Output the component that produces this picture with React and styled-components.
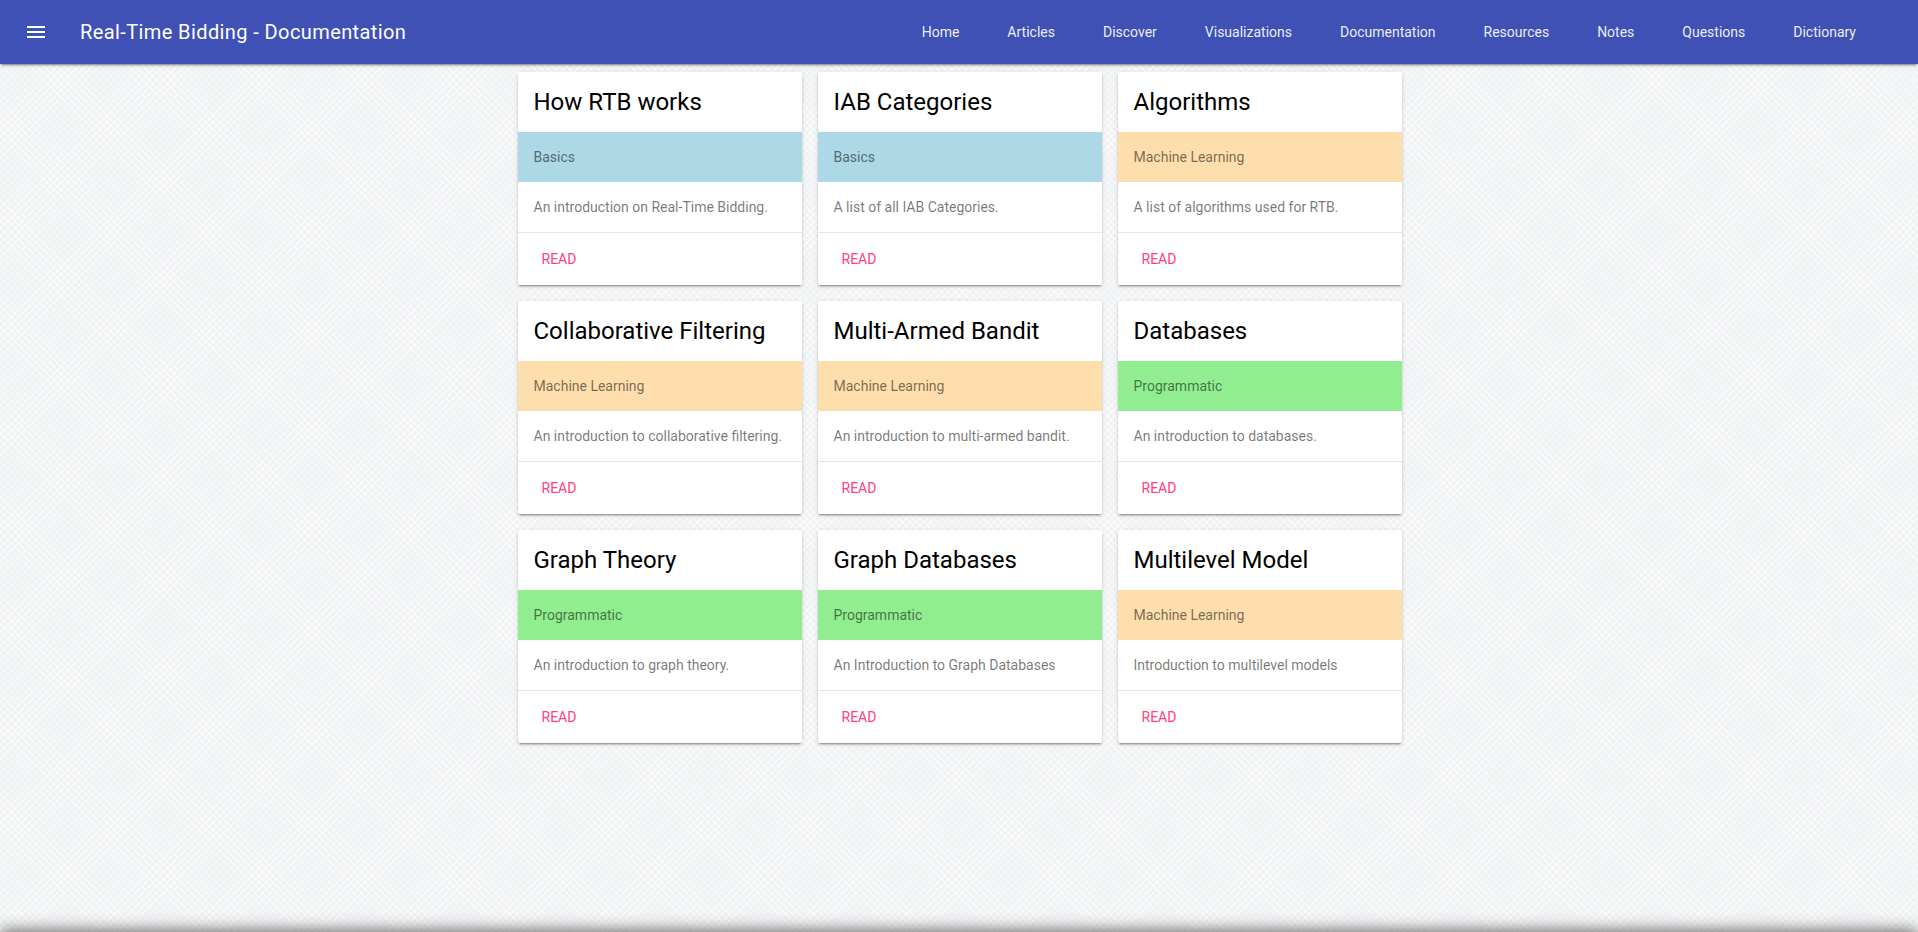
import React from 'react';
import styled, { createGlobalStyle } from 'styled-components';

const GlobalStyle = createGlobalStyle`
  html, body {
    margin: 0;
    padding: 0;
  }
  body {
    font-family: Roboto, "Helvetica Neue", Arial, sans-serif;
    background-color: #f1f2f4;
    background-image:
      repeating-linear-gradient(45deg, rgba(255, 255, 255, 0.6) 0 1px, transparent 1px 5px),
      repeating-linear-gradient(-45deg, rgba(255, 255, 255, 0.6) 0 1px, transparent 1px 5px);
  }
`;

const cards = [
  { title: 'How RTB works', category: 'Basics', text: 'An introduction on Real-Time Bidding.' },
  { title: 'IAB Categories', category: 'Basics', text: 'A list of all IAB Categories.' },
  { title: 'Algorithms', category: 'Machine Learning', text: 'A list of algorithms used for RTB.' },
  { title: 'Collaborative Filtering', category: 'Machine Learning', text: 'An introduction to collaborative filtering.' },
  { title: 'Multi-Armed Bandit', category: 'Machine Learning', text: 'An introduction to multi-armed bandit.' },
  { title: 'Databases', category: 'Programmatic', text: 'An introduction to databases.' },
  { title: 'Graph Theory', category: 'Programmatic', text: 'An introduction to graph theory.' },
  { title: 'Graph Databases', category: 'Programmatic', text: 'An Introduction to Graph Databases' },
  { title: 'Multilevel Model', category: 'Machine Learning', text: 'Introduction to multilevel models' },
];

const categoryColors = {
  'Basics': '#add8e6',
  'Machine Learning': '#ffdead',
  'Programmatic': '#90ee90',
};

const links = ['Home', 'Articles', 'Discover', 'Visualizations', 'Documentation', 'Resources', 'Notes', 'Questions', 'Dictionary'];

const Page = styled.div`
  min-height: 100vh;
  display: flex;
  flex-direction: column;
`;

const Header = styled.header`
  height: 64px;
  background: #3f51b5;
  color: #fff;
  display: flex;
  align-items: center;
  box-shadow: 0 2px 2px 0 rgba(0, 0, 0, 0.14), 0 3px 1px -2px rgba(0, 0, 0, 0.2), 0 1px 5px 0 rgba(0, 0, 0, 0.12);
  position: relative;
  z-index: 2;
`;

const MenuButton = styled.div`
  width: 80px;
  height: 64px;
  display: flex;
  align-items: center;
  padding-left: 24px;
  box-sizing: border-box;
  cursor: pointer;
`;

const Title = styled.span`
  font-size: 20px;
  line-height: 1;
  font-weight: 400;
  letter-spacing: 0.02em;
  flex: 1;
`;

const Nav = styled.nav`
  display: flex;
  height: 64px;
  padding-right: 38px;
`;

const NavLink = styled.a`
  padding: 0 24px;
  line-height: 64px;
  font-size: 14px;
  color: rgba(255, 255, 255, 0.92);
  text-decoration: none;
  cursor: pointer;
`;

const Main = styled.main`
  flex: 1;
  display: flex;
  justify-content: center;
  padding-top: 8px;
`;

const Grid = styled.div`
  display: grid;
  grid-template-columns: repeat(3, 284px);
  gap: 16px;
  align-content: start;
  margin-left: 1px;
`;

const Card = styled.div`
  background: #fff;
  border-radius: 2px;
  display: flex;
  flex-direction: column;
  box-shadow: 0 2px 2px 0 rgba(0, 0, 0, 0.14), 0 3px 1px -2px rgba(0, 0, 0, 0.2), 0 1px 5px 0 rgba(0, 0, 0, 0.12);
`;

const CardTitle = styled.h2`
  margin: 0;
  padding: 16px;
  font-size: 24px;
  line-height: 28px;
  font-weight: 400;
  color: #000;
`;

const Supporting = styled.div`
  padding: 16px;
  font-size: 14px;
  line-height: 18px;
  color: rgba(0, 0, 0, 0.54);
  background: ${p => p.$bg || 'transparent'};
`;

const Actions = styled.div`
  border-top: 1px solid rgba(0, 0, 0, 0.1);
  padding: 8px;
`;

const Button = styled.button`
  height: 36px;
  min-width: 64px;
  padding: 0 16px;
  border: none;
  background: transparent;
  font-family: Roboto, "Helvetica Neue", Arial, sans-serif;
  font-size: 14px;
  font-weight: 400;
  text-transform: uppercase;
  color: #ff4081;
  cursor: pointer;
`;

const Footer = styled.footer`
  height: 60px;
  background: #424242;
  box-shadow: 0 -3px 14px rgba(0, 0, 0, 0.5);
`;

const MenuIcon = () => (
  <svg width="24" height="24" viewBox="0 0 24 24" fill="#fff">
    <path d="M3 18h18v-2H3v2zm0-5h18v-2H3v2zm0-7v2h18V6H3z" />
  </svg>
);

export default function App() {
  return (
    <>
      <GlobalStyle />
      <Page>
        <Header>
          <MenuButton>
            <MenuIcon />
          </MenuButton>
          <Title>Real-Time Bidding - Documentation</Title>
          <Nav>
            {links.map(l => (
              <NavLink key={l}>{l}</NavLink>
            ))}
          </Nav>
        </Header>
        <Main>
          <Grid>
            {cards.map(c => (
              <Card key={c.title}>
                <CardTitle>{c.title}</CardTitle>
                <Supporting $bg={categoryColors[c.category]}>{c.category}</Supporting>
                <Supporting>{c.text}</Supporting>
                <Actions>
                  <Button>Read</Button>
                </Actions>
              </Card>
            ))}
          </Grid>
        </Main>
      </Page>
      <Footer />
    </>
  );
}
